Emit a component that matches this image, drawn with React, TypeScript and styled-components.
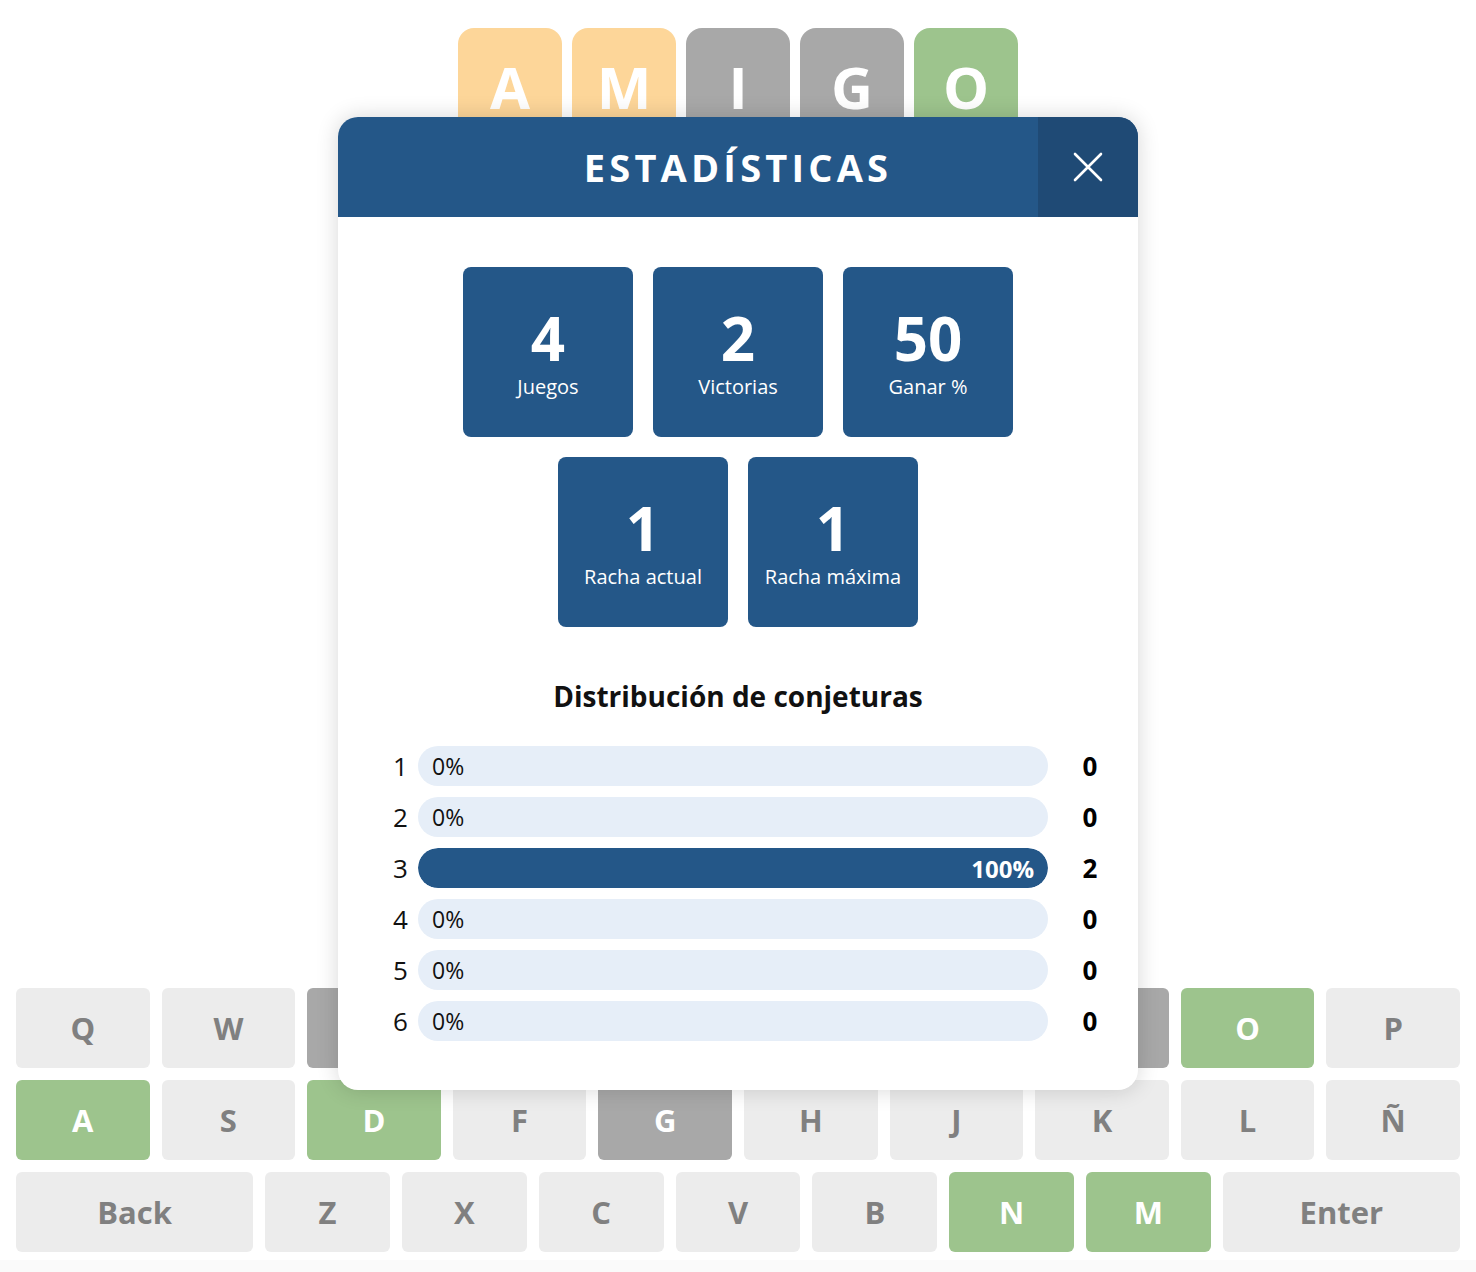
import React from "react";
import styled, { createGlobalStyle } from "styled-components";

const GlobalStyle = createGlobalStyle`
  html, body { margin: 0; padding: 0; background: #fff; }
  body { font-family: "Open Sans", "Noto Sans", sans-serif; }
  * { box-sizing: border-box; }
`;

type TileState = "present" | "absent" | "correct" | "empty";

const colors: Record<TileState, string> = {
  present: "#fdd699",
  absent: "#a8a8a8",
  correct: "#9dc48d",
  empty: "#ececec",
};

const Page = styled.div`
  position: relative;
  height: 1272px;
  display: flex;
  flex-direction: column;
  overflow: hidden;
`;

const Board = styled.div`
  display: flex;
  justify-content: center;
  gap: 10px;
  padding-top: 28px;
`;

const Tile = styled.div<{ $state: TileState }>`
  width: 104px;
  height: 118px;
  border-radius: 16px;
  background: ${(p) => colors[p.$state]};
  color: #fff;
  display: flex;
  align-items: center;
  justify-content: center;
  font-size: 58px;
  font-weight: 700;
  line-height: 1;
`;

const Keyboard = styled.div`
  margin-top: auto;
  padding: 0 16px 8px;
  display: flex;
  flex-direction: column;
  gap: 12px;
`;

const KeyRow = styled.div`
  display: flex;
  gap: 12px;
`;

const Key = styled.div<{ $state: TileState; $wide?: boolean }>`
  flex: ${(p) => (p.$wide ? 1.9 : 1)} 1 0;
  height: 80px;
  border-radius: 6px;
  background: ${(p) => colors[p.$state]};
  color: ${(p) => (p.$state === "empty" ? "#808080" : "#fff")};
  display: flex;
  align-items: center;
  justify-content: center;
  font-size: 31px;
  font-weight: 700;
`;

const Footer = styled.div`
  height: 12px;
  background: #fafafa;
`;

const Modal = styled.div`
  position: absolute;
  top: 117px;
  left: 50%;
  transform: translateX(-50%);
  width: 800px;
  height: 973px;
  background: #fff;
  border-radius: 20px;
  box-shadow: 0 0 22px rgba(0, 0, 0, 0.16);
  overflow: hidden;
  display: flex;
  flex-direction: column;
`;

const Header = styled.div`
  position: relative;
  height: 100px;
  background: #245788;
  display: flex;
  align-items: center;
  justify-content: center;
`;

const Title = styled.h2`
  margin: 0;
  color: #fff;
  font-size: 38px;
  font-weight: 700;
  letter-spacing: 4.2px;
`;

const CloseButton = styled.button`
  position: absolute;
  top: 0;
  right: 0;
  width: 100px;
  height: 100px;
  border: 0;
  padding: 0;
  background: #1f4a75;
  display: flex;
  align-items: center;
  justify-content: center;
  cursor: pointer;
`;

const Body = styled.div`
  padding-top: 50px;
  display: flex;
  flex-direction: column;
`;

const Stats = styled.div`
  width: 550px;
  margin: 0 auto;
  display: flex;
  flex-wrap: wrap;
  justify-content: center;
  gap: 20px;
`;

const StatBox = styled.div`
  width: 170px;
  height: 170px;
  border-radius: 8px;
  background: #245788;
  color: #fff;
  display: flex;
  flex-direction: column;
  align-items: center;
  justify-content: center;
`;

const StatValue = styled.div`
  font-size: 60px;
  font-weight: 700;
  line-height: 66px;
`;

const StatLabel = styled.div`
  margin-top: 2px;
  font-size: 20px;
  line-height: 27px;
`;

const Heading = styled.h3`
  margin: 50px 0 31px;
  text-align: center;
  font-size: 28px;
  line-height: 38px;
  font-weight: 700;
  color: #111;
`;

const Distribution = styled.div`
  padding: 0 28px 0 55px;
  display: flex;
  flex-direction: column;
  gap: 11px;
`;

const DistRow = styled.div`
  display: flex;
  align-items: center;
  height: 40px;
`;

const Guess = styled.div`
  width: 25px;
  font-size: 26px;
  color: #111;
`;

const Track = styled.div`
  position: relative;
  flex: 1;
  height: 40px;
  border-radius: 20px;
  background: #e6eef8;
  display: flex;
  align-items: center;
  overflow: hidden;
`;

const EmptyText = styled.span`
  padding-left: 14px;
  font-size: 23px;
  color: #111;
`;

const Fill = styled.div`
  height: 100%;
  border-radius: 20px;
  background: #245788;
  color: #fff;
  display: flex;
  align-items: center;
  justify-content: flex-end;
  padding-right: 14px;
  font-size: 24px;
  font-weight: 700;
`;

const Count = styled.div`
  width: 40px;
  margin-left: 22px;
  text-align: center;
  font-size: 26px;
  font-weight: 700;
  color: #000;
`;

const tiles: [string, TileState][] = [
  ["A", "present"],
  ["M", "present"],
  ["I", "absent"],
  ["G", "absent"],
  ["O", "correct"],
];

const keyStates: Record<string, TileState> = {
  E: "absent",
  I: "absent",
  O: "correct",
  A: "correct",
  D: "correct",
  G: "absent",
  N: "correct",
  M: "correct",
};

const rows = [
  ["Q", "W", "E", "R", "T", "Y", "U", "I", "O", "P"],
  ["A", "S", "D", "F", "G", "H", "J", "K", "L", "Ñ"],
  ["Back", "Z", "X", "C", "V", "B", "N", "M", "Enter"],
];

const stats = [
  { value: "4", label: "Juegos" },
  { value: "2", label: "Victorias" },
  { value: "50", label: "Ganar %" },
  { value: "1", label: "Racha actual" },
  { value: "1", label: "Racha máxima" },
];

const dist = [0, 0, 2, 0, 0, 0];

export default function App() {
  const max = Math.max(...dist);
  const total = dist.reduce((a, b) => a + b, 0);
  return (
    <Page>
      <GlobalStyle />
      <Board>
        {tiles.map(([l, s], i) => (
          <Tile key={i} $state={s}>
            {l}
          </Tile>
        ))}
      </Board>
      <Keyboard>
        {rows.map((row, ri) => (
          <KeyRow key={ri}>
            {row.map((k) => (
              <Key key={k} $state={keyStates[k] || "empty"} $wide={k.length > 1}>
                {k}
              </Key>
            ))}
          </KeyRow>
        ))}
      </Keyboard>
      <Footer />
      <Modal>
        <Header>
          <Title>ESTADÍSTICAS</Title>
          <CloseButton aria-label="Cerrar">
            <svg width="30" height="30" viewBox="0 0 30 30">
              <path d="M2 2 L28 28 M28 2 L2 28" stroke="#fff" strokeWidth="2.6" strokeLinecap="round" />
            </svg>
          </CloseButton>
        </Header>
        <Body>
          <Stats>
            {stats.map((s) => (
              <StatBox key={s.label}>
                <StatValue>{s.value}</StatValue>
                <StatLabel>{s.label}</StatLabel>
              </StatBox>
            ))}
          </Stats>
          <Heading>Distribución de conjeturas</Heading>
          <Distribution>
            {dist.map((c, i) => {
              const pct = total ? Math.round((c / total) * 100) : 0;
              const w = max ? (c / max) * 100 : 0;
              return (
                <DistRow key={i}>
                  <Guess>{i + 1}</Guess>
                  <Track>
                    {c > 0 ? (
                      <Fill style={{ width: `${w}%` }}>{pct}%</Fill>
                    ) : (
                      <EmptyText>{pct}%</EmptyText>
                    )}
                  </Track>
                  <Count>{c}</Count>
                </DistRow>
              );
            })}
          </Distribution>
        </Body>
      </Modal>
    </Page>
  );
}
